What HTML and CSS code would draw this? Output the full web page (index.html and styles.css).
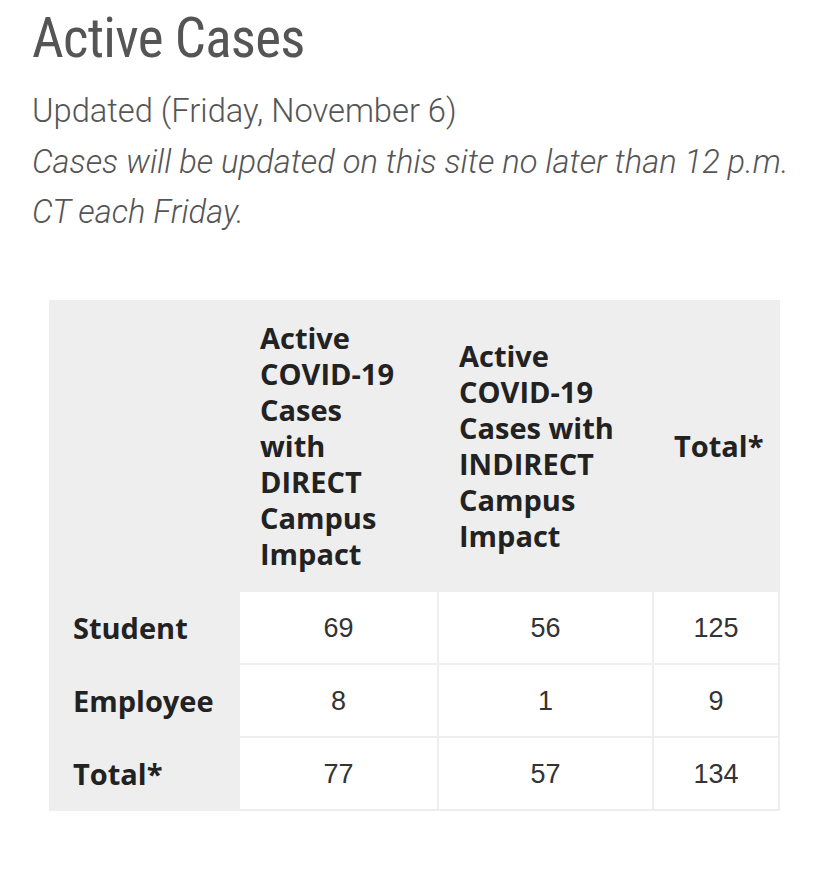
FILE: index.html
```html
<!DOCTYPE html>
<html lang="en">
<head>
<meta charset="utf-8">
<title>Active Cases</title>
<link rel="stylesheet" href="styles.css">
</head>
<body>
<main class="page">
  <h1 class="title">Active Cases</h1>
  <p class="updated">Updated (Friday, November 6)</p>
  <p class="note">Cases will be updated on this site no later than 12 p.m. CT each Friday.</p>

  <div class="table-wrap">
    <table class="cases">
      <colgroup>
        <col class="c-label">
        <col class="c-direct">
        <col class="c-indirect">
        <col class="c-total">
      </colgroup>
      <thead>
        <tr>
          <th></th>
          <th>Active<br>COVID-19<br>Cases<br>with<br>DIRECT<br>Campus<br>Impact</th>
          <th>Active<br>COVID-19<br>Cases with<br>INDIRECT<br>Campus<br>Impact</th>
          <th>Total*</th>
        </tr>
      </thead>
      <tbody>
        <tr>
          <th>Student</th>
          <td>69</td>
          <td>56</td>
          <td>125</td>
        </tr>
        <tr>
          <th>Employee</th>
          <td>8</td>
          <td>1</td>
          <td>9</td>
        </tr>
        <tr>
          <th>Total*</th>
          <td>77</td>
          <td>57</td>
          <td>134</td>
        </tr>
      </tbody>
    </table>
  </div>
</main>
</body>
</html>
```

FILE: styles.css
```css
html, body {
  margin: 0;
  padding: 0;
  background: #ffffff;
}

.page {
  padding: 0 0 0 32px;
  width: 770px;
}

.title {
  margin: 5px 0 0 0;
  font-family: Roboto, "Liberation Sans", sans-serif;
  font-weight: 400;
  font-stretch: 75%;
  font-size: 55px;
  line-height: 66px;
  letter-spacing: -0.7px;
  color: #555555;
}

.updated {
  margin: 15px 0 0 0;
  font-family: Roboto, "Liberation Sans", sans-serif;
  font-weight: 300;
  font-size: 32.7px;
  line-height: 50px;
  color: #555555;
}

.note {
  margin: 1px 0 0 0;
  font-family: Roboto, "Liberation Sans", sans-serif;
  font-weight: 300;
  font-style: italic;
  font-size: 32.7px;
  line-height: 50px;
  color: #555555;
}

.table-wrap {
  margin: 63px 0 0 17px;
}

.cases {
  border-collapse: collapse;
  table-layout: fixed;
  width: 729px;
  border: 2px solid #eeeeee;
}

.c-label { width: 189px; }
.c-direct { width: 199px; }
.c-indirect { width: 215px; }
.c-total { width: 126px; }

.cases thead th {
  background: #eeeeee;
  border: 2px solid #eeeeee;
  font-family: "Open Sans", "DejaVu Sans", sans-serif;
  font-weight: 700;
  font-size: 29px;
  line-height: 36px;
  color: #222222;
  text-align: left;
  vertical-align: middle;
  padding: 18px 20px;
}

.cases tbody th {
  background: #eeeeee;
  border: 2px solid #eeeeee;
  font-family: "Open Sans", "DejaVu Sans", sans-serif;
  font-weight: 700;
  font-size: 29px;
  line-height: 36px;
  color: #222222;
  text-align: left;
  padding: 18px 22px 17px;
}

.cases tbody td {
  background: #ffffff;
  border: 2px solid #eeeeee;
  font-family: "Liberation Sans", Arial, sans-serif;
  font-size: 27px;
  line-height: 36px;
  color: #333333;
  text-align: center;
  padding: 18px 10px 17px;
}
```
